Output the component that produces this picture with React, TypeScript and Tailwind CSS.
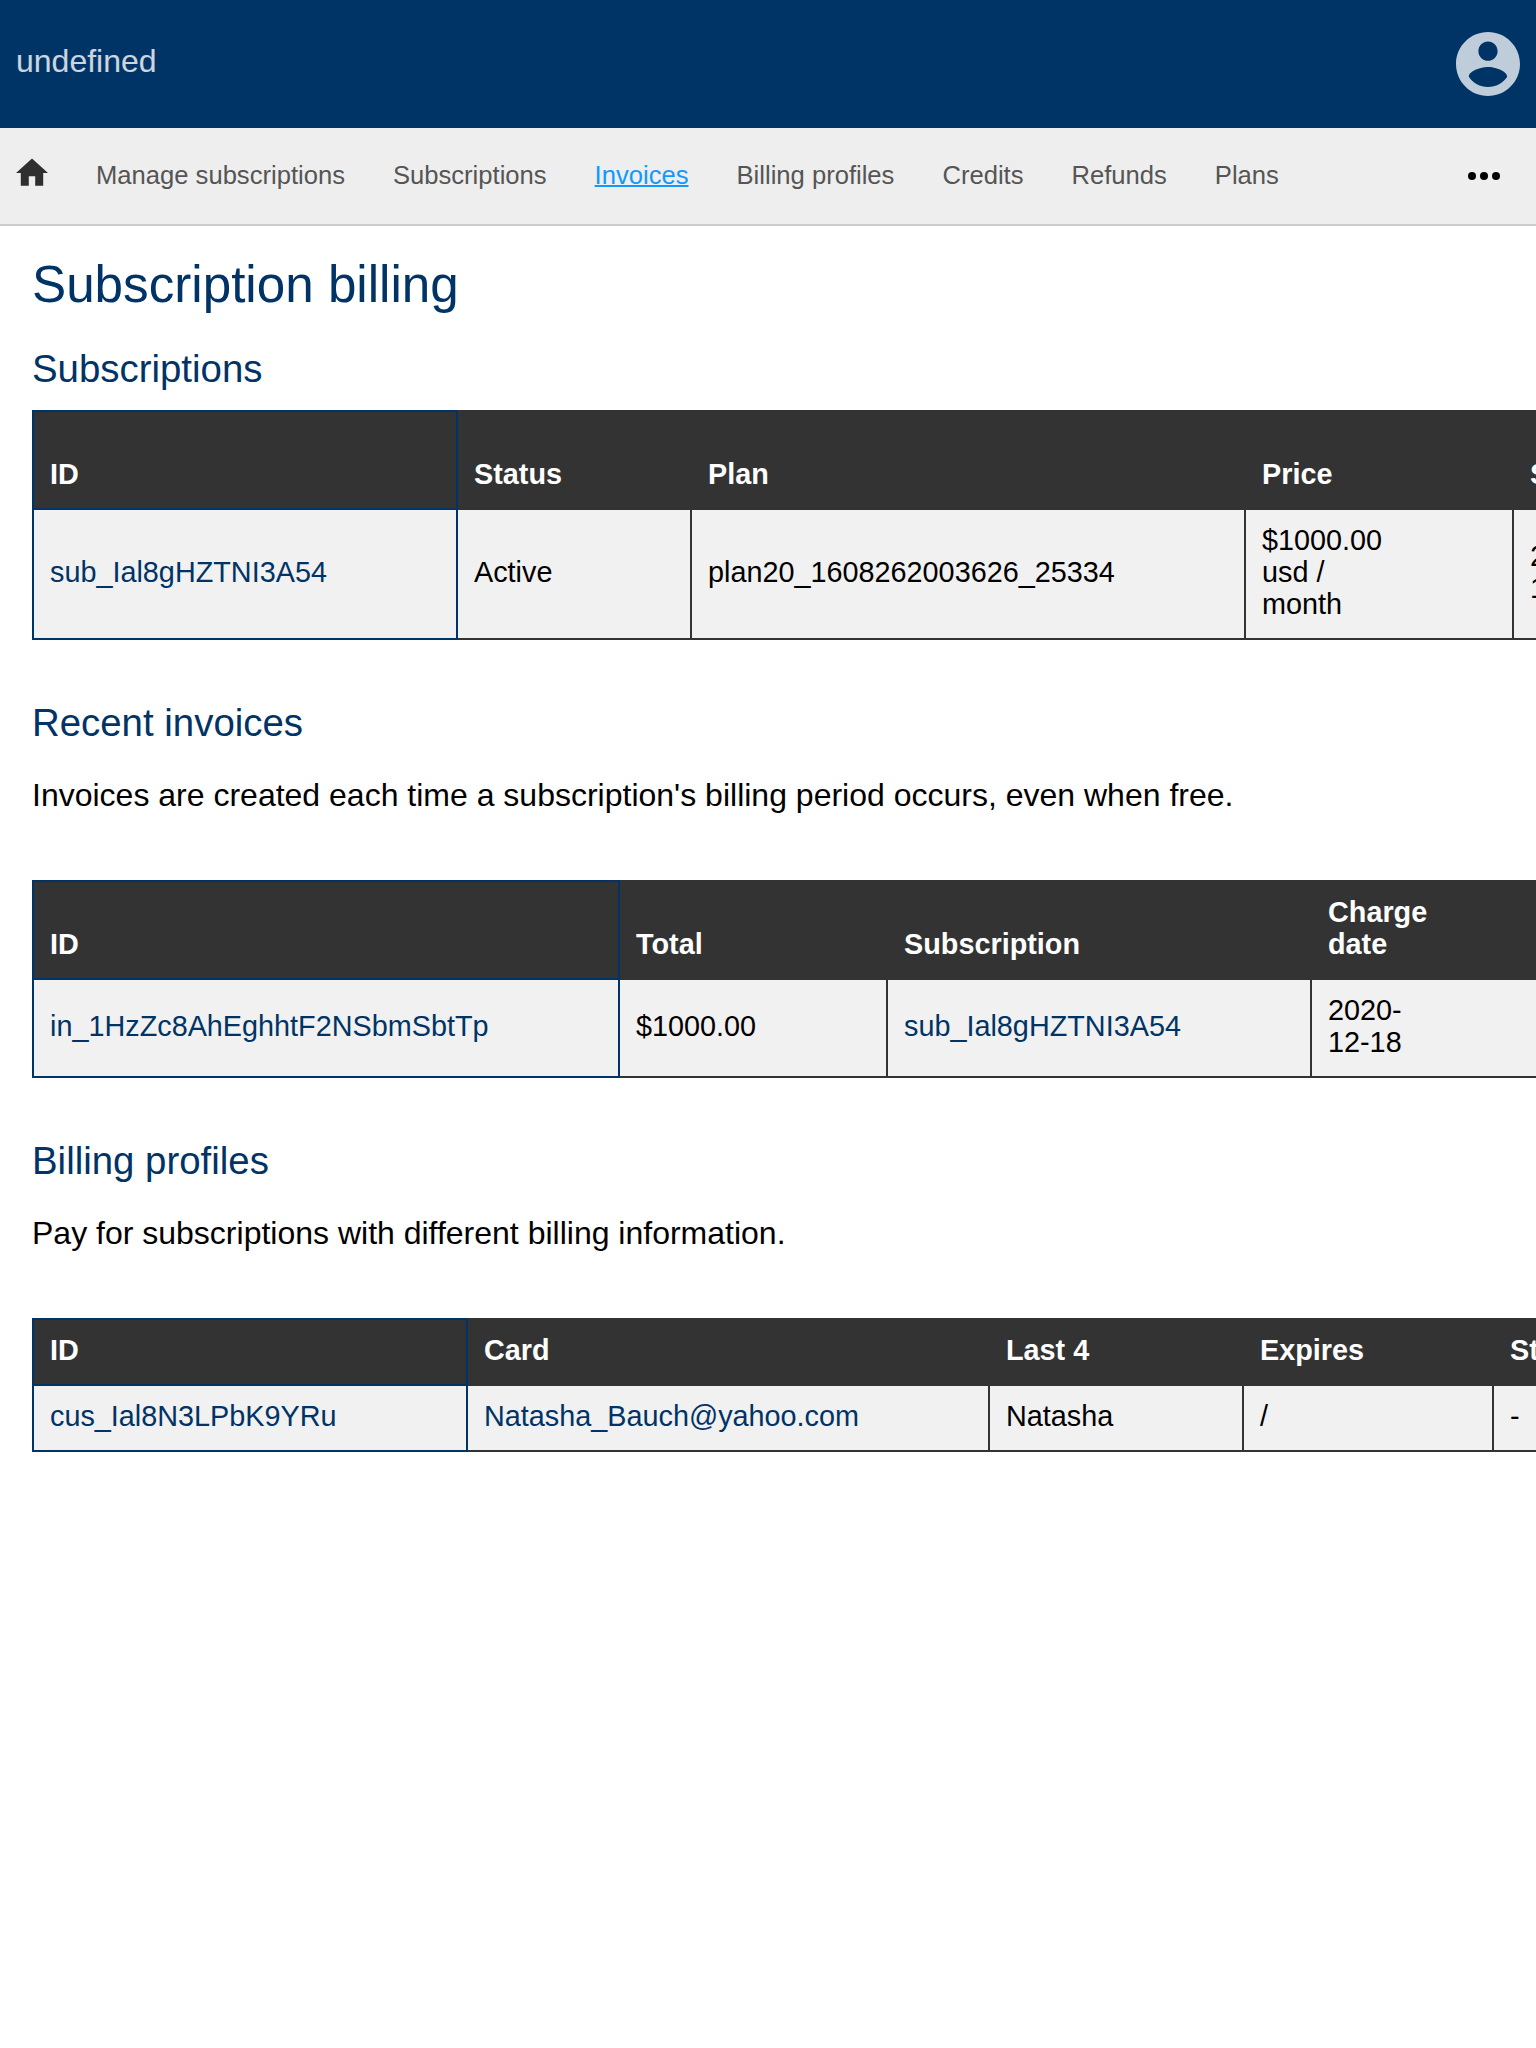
import type { ReactNode } from 'react';

const navItems = ['Manage subscriptions', 'Subscriptions', 'Invoices', 'Billing profiles', 'Credits', 'Refunds', 'Plans'];

type Table = { width: string; cols: string[]; tall?: boolean; head: ReactNode[]; row: ReactNode[] };

const Link = ({ children }: { children: ReactNode }) => <a className="text-[#003366]">{children}</a>;

const subscriptions: Table = {
  width: 'w-[1782px]',
  cols: ['w-[424px]', 'w-[234px]', 'w-[554px]', 'w-[268px]', 'w-[300px]'],
  tall: true,
  head: ['ID', 'Status', 'Plan', 'Price', 'Start'],
  row: [<Link>sub_Ial8gHZTNI3A54</Link>, 'Active', 'plan20_1608262003626_25334', <>$1000.00<br />usd /<br />month</>, <>2020-<br />12-18</>],
};

const invoices: Table = {
  width: 'w-[1680px]',
  cols: ['w-[586px]', 'w-[268px]', 'w-[424px]', 'w-[400px]'],
  tall: true,
  head: ['ID', 'Total', 'Subscription', <>Charge<br />date</>],
  row: [<Link>in_1HzZc8AhEghhtF2NSbmSbtTp</Link>, '$1000.00', <Link>sub_Ial8gHZTNI3A54</Link>, <>2020-<br />12-18</>],
};

const profiles: Table = {
  width: 'w-[1762px]',
  cols: ['w-[434px]', 'w-[522px]', 'w-[254px]', 'w-[250px]', 'w-[300px]'],
  head: ['ID', 'Card', 'Last 4', 'Expires', 'Status'],
  row: [<Link>cus_Ial8N3LPbK9YRu</Link>, <Link>Natasha_Bauch@yahoo.com</Link>, 'Natasha', '/', '-'],
};

function DataTable({ width, cols, tall, head, row }: Table) {
  return (
    <table className={`${width} table-fixed border-collapse text-left text-[28.8px] leading-[32px]`}>
      <colgroup>{cols.map((c, i) => <col key={i} className={c} />)}</colgroup>
      <thead>
        <tr className={tall ? 'h-[98px]' : 'h-[66px]'}>
          {head.map((h, i) => (
            <th key={i} className={`border-2 bg-[#333333] px-4 pt-[14px] pb-[18px] align-bottom font-bold text-white ${i === 0 ? 'border-[#003366]' : 'border-[#333333]'}`}>{h}</th>
          ))}
        </tr>
      </thead>
      <tbody>
        <tr>
          {row.map((c, i) => (
            <td key={i} className={`border-2 bg-[#f1f1f1] px-4 pt-[14px] pb-[18px] align-middle ${i === 0 ? 'border-[#003366]' : 'border-[#333333]'}`}>{c}</td>
          ))}
        </tr>
      </tbody>
    </table>
  );
}

const Heading = ({ children }: { children: ReactNode }) => (
  <h2 className="h-[44px] text-[38.4px] leading-[44px] text-[#003366]">{children}</h2>
);

export default function App() {
  return (
    <div className="h-[2048px] w-[1536px] overflow-hidden bg-white font-['Liberation_Sans',Arial,sans-serif] text-black">
      <header className="flex h-32 items-center justify-between bg-[#003366] px-4">
        <div className="pb-[6px] text-[32px] leading-[36px] text-white/80">undefined</div>
        <svg className="size-16" viewBox="2 2 20 20" fill="#bfccd9">
          <path d="M12 2C6.48 2 2 6.48 2 12s4.48 10 10 10 10-4.48 10-10S17.52 2 12 2zm0 3c1.66 0 3 1.34 3 3s-1.34 3-3 3-3-1.34-3-3 1.34-3 3-3zm0 14.2c-2.5 0-4.71-1.28-6-3.22.03-1.99 4-3.08 6-3.08 1.99 0 5.97 1.09 6 3.08-1.29 1.94-3.5 3.22-6 3.22z" />
        </svg>
      </header>
      <nav className="flex h-[98px] items-center border-b-2 border-[#cccccc] bg-[#eeeeee] pr-9 pl-4 text-[25.6px] leading-[30px] text-[#555555]">
        <svg className="mr-12 mb-[6px] size-8" viewBox="2 2 20 20" fill="#2f2f2f">
          <path d="M10 20v-6h4v6h5v-8h3L12 3 2 12h3v8z" />
        </svg>
        <div className="flex gap-12 pb-[2px]">
          {navItems.map((n) => (
            <a key={n} className={n === 'Invoices' ? 'text-[#1199ff] underline decoration-2' : ''}>{n}</a>
          ))}
        </div>
        <svg className="ml-auto h-2 w-8" viewBox="0 0 32 8" fill="#000">
          <circle cx="4" cy="4" r="4" />
          <circle cx="16" cy="4" r="4" />
          <circle cx="28" cy="4" r="4" />
        </svg>
      </nav>
      <main className="pt-[29px] pl-8">
        <h1 className="h-[60px] text-[51.2px] leading-[60px] text-[#003366]">Subscription billing</h1>
        <section className="mt-8">
          <Heading>Subscriptions</Heading>
          <div className="mt-[19px]"><DataTable {...subscriptions} /></div>
        </section>
        <section className="mt-[61px]">
          <Heading>Recent invoices</Heading>
          <p className="mt-8 h-[36px] text-[32px] leading-[36px]">Invoices are created each time a subscription's billing period occurs, even when free.</p>
          <div className="mt-[67px]"><DataTable {...invoices} /></div>
        </section>
        <section className="mt-[61px]">
          <Heading>Billing profiles</Heading>
          <p className="mt-8 h-[36px] text-[32px] leading-[36px]">Pay for subscriptions with different billing information.</p>
          <div className="mt-[67px]"><DataTable {...profiles} /></div>
        </section>
      </main>
    </div>
  );
}
